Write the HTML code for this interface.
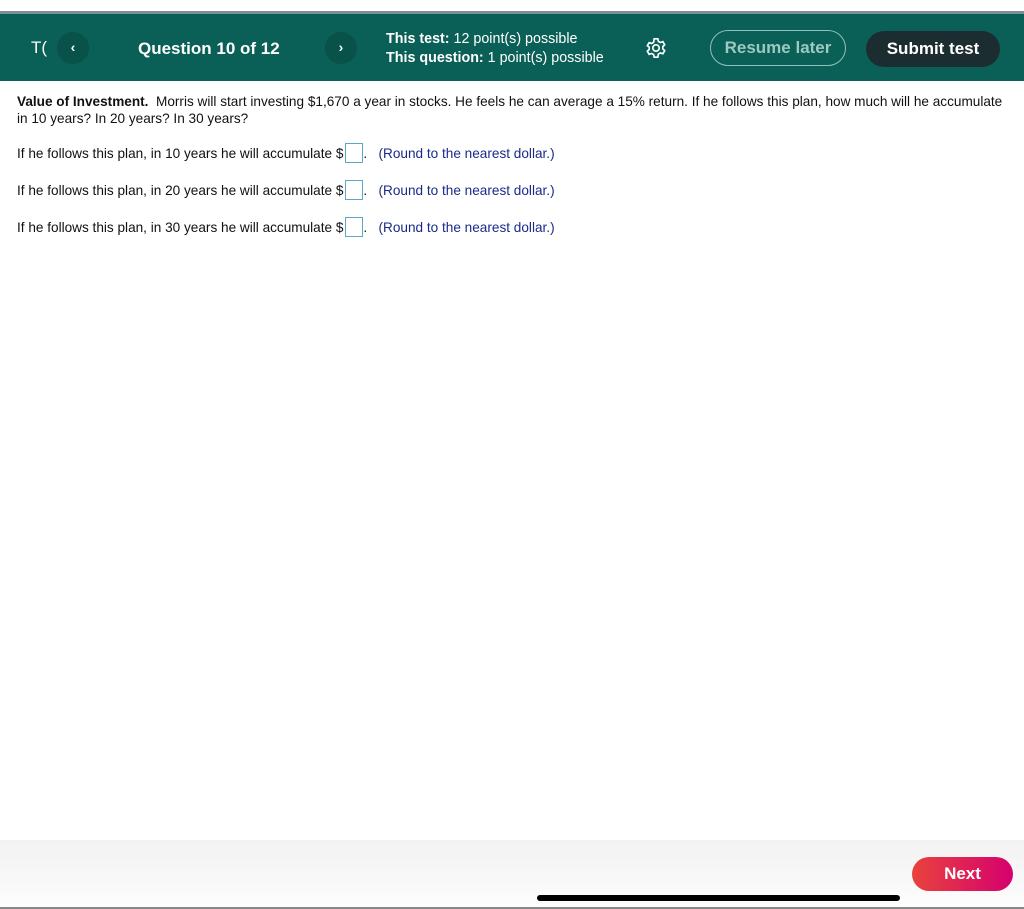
<!DOCTYPE html>
<html><head><style>
body{margin:0;width:1024px;height:909px;position:relative;background:#fff;font-family:"Liberation Sans",Arial,sans-serif;overflow:hidden}
.top{position:absolute;left:0;top:11px;width:1024px;height:3px;background:#7f9197}
.hdr{position:absolute;left:0;top:14px;width:1024px;height:67px;background:#0a5f56;color:#fff}
.hdr>*{position:absolute}
.circ{width:32px;height:32px;border-radius:50%;background:#08524a;text-align:center;line-height:31px;font-size:14px;font-weight:bold}
.txt{font-size:13.6px;color:#111;position:absolute}
.box{display:inline-block;width:16px;height:18px;border:1px solid #5aa9c4;vertical-align:-5px;margin-left:2px}
.hint{color:#1a2a8a}
.foot{position:absolute;left:0;top:840px;width:1024px;height:67px;background:linear-gradient(#f2f2f2,#fdfdfd)}
</style></head><body>
<div class="top"></div>
<div class="hdr">
<div style="left:31px;top:24px;font-size:17px">T<span style="letter-spacing:-3px">(</span></div>
<div class="circ" style="left:57px;top:18px">‹</div>
<div style="left:138px;top:25px;font-size:17px;font-weight:bold">Question 10 of 12</div>
<div class="circ" style="left:325px;top:18px">›</div>
<div style="left:386px;top:16px;font-size:14.3px;line-height:19px"><b>This test:</b> 12 point(s) possible<br><b>This question:</b> 1 point(s) possible</div>
<svg style="left:645px;top:23px" width="22" height="22" viewBox="0 0 24 24" fill="none" stroke="#fff" stroke-width="1.8"><path d="M10 2h4l.6 2.8 2.2 1.2 2.7-.9 2 3.4-2.1 1.9v2.6l2.1 1.9-2 3.4-2.7-.9-2.2 1.2L14 22h-4l-.6-2.8-2.2-1.2-2.7.9-2-3.4 2.1-1.9v-2.6L2.5 9.5l2-3.4 2.7.9 2.2-1.2z"/><circle cx="12" cy="12" r="3.5"/></svg>
<div style="left:710px;top:16px;width:134px;height:34px;border:1.5px solid #8fc2b8;border-radius:18px;color:#9cc9c0;font-size:17px;font-weight:bold;text-align:center;line-height:34px">Resume later</div>
<div style="left:866px;top:17px;width:134px;height:36px;background:#1c2d31;border-radius:18px;font-size:17px;font-weight:bold;text-align:center;line-height:36px">Submit test</div>
</div>
<div class="txt" style="left:17px;top:93px;width:995px;line-height:17px"><b>Value of Investment.</b>&nbsp; Morris will start investing $1,670 a year in stocks. He feels he can average a 15% return. If he follows this plan, how much will he accumulate in 10 years? In 20 years? In 30 years?</div>
<div class="txt" style="left:17px;top:143px">If he follows this plan, in 10 years he will accumulate $<span class="box"></span>. &nbsp;&nbsp;<span class="hint">(Round to the nearest dollar.)</span></div>
<div class="txt" style="left:17px;top:180px">If he follows this plan, in 20 years he will accumulate $<span class="box"></span>. &nbsp;&nbsp;<span class="hint">(Round to the nearest dollar.)</span></div>
<div class="txt" style="left:17px;top:217px">If he follows this plan, in 30 years he will accumulate $<span class="box"></span>. &nbsp;&nbsp;<span class="hint">(Round to the nearest dollar.)</span></div>
<div class="foot"></div>
<div style="position:absolute;left:912px;top:857px;width:101px;height:34px;border-radius:17px;background:linear-gradient(90deg,#e8433c,#d6006e);color:#fff;font-weight:bold;font-size:17px;text-align:center;line-height:34px">Next</div>
<div style="position:absolute;left:537px;top:895px;width:363px;height:6px;border-radius:3px;background:#000"></div>
<div style="position:absolute;left:0;top:907px;width:1024px;height:2px;background:#888"></div>
</body></html>
